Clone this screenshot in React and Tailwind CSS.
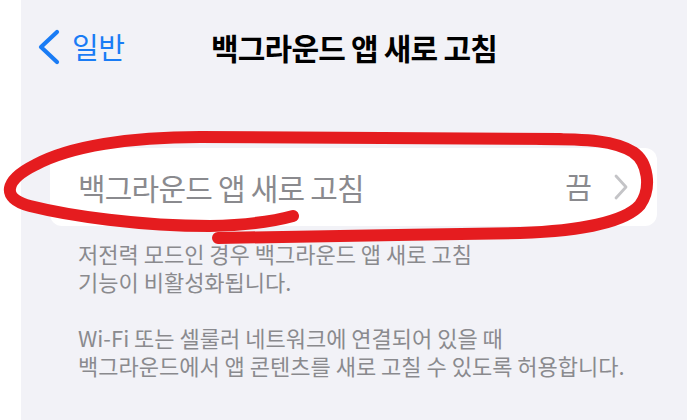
import React from 'react';

const font = { fontFamily: '"Noto Sans CJK KR", "Noto Sans", sans-serif' };

const BackChevron = () => (
  <svg width="22" height="36" viewBox="0 0 22 36" fill="none" className="shrink-0">
    <path d="M19 3 L3 18 L19 33" stroke="#1a7cf5" strokeWidth="4.2" strokeLinecap="round" strokeLinejoin="round" />
  </svg>
);

const RowChevron = () => (
  <svg width="14" height="26" viewBox="0 0 14 26" fill="none" className="shrink-0">
    <path d="M2 2 L12 13 L2 24" stroke="#c4c4c7" strokeWidth="2.8" strokeLinecap="round" strokeLinejoin="round" />
  </svg>
);

const Scribble = () => (
  <svg className="absolute inset-0 pointer-events-none" width="687" height="420" viewBox="0 0 687 420" fill="none">
    <path
      d="M560 139 L200 137 C130 137 70 146 35 165 C5 180 0 198 30 206 C70 216 140 226 210 226 C250 225 275 221 293 216"
      stroke="#e51c1f"
      strokeWidth="12"
      strokeLinecap="round"
      strokeLinejoin="round"
    />
    <path
      d="M218 238 C300 236 420 235 520 233 C580 231 625 222 640 205 C652 188 648 162 633 152 C615 141 590 139 540 139"
      stroke="#e51c1f"
      strokeWidth="12"
      strokeLinecap="round"
      strokeLinejoin="round"
    />
  </svg>
);

const App = () => {
  return (
    <div className="relative w-[687px] h-[420px] overflow-hidden flex bg-white" style={font}>
      <div className="w-[21px] bg-white" />
      <div className="flex-1 bg-[#f2f2f7] flex flex-col">
        {/* 내비게이션 */}
        <div className="relative h-[94px] flex items-center justify-center">
          <div className="absolute left-[17px] top-0 h-full flex items-center gap-[12px]">
            <BackChevron />
            <span className="text-[29px] text-[#1a7cf5] tracking-[-0.5px]">일반</span>
          </div>
          <h1 className="text-[30px] font-bold text-black tracking-[-0.8px]">백그라운드 앱 새로 고침</h1>
        </div>

        {/* 설정 행 */}
        <div className="mt-[54px] ml-[29px] mr-[30px] h-[78px] bg-white rounded-[12px] flex items-center pl-[28px] pr-[29px]">
          <span className="flex-1 text-[30px] text-[#8a8a8e] tracking-[-0.8px]">백그라운드 앱 새로 고침</span>
          <span className="text-[29px] text-[#8a8a8e]">끔</span>
          <div className="ml-[22px]">
            <RowChevron />
          </div>
        </div>

        {/* 설명 */}
        <div className="mt-[13px] pl-[57px] pr-[10px] text-[22px] leading-[28px] text-[#8a8a8e]">
          <p>저전력 모드인 경우 백그라운드 앱 새로 고침</p>
          <p>기능이 비활성화됩니다.</p>
          <p className="mt-[28px]">Wi-Fi 또는 셀룰러 네트워크에 연결되어 있을 때</p>
          <p>백그라운드에서 앱 콘텐츠를 새로 고칠 수 있도록 허용합니다.</p>
        </div>
      </div>
      <Scribble />
    </div>
  );
};

export default App;
